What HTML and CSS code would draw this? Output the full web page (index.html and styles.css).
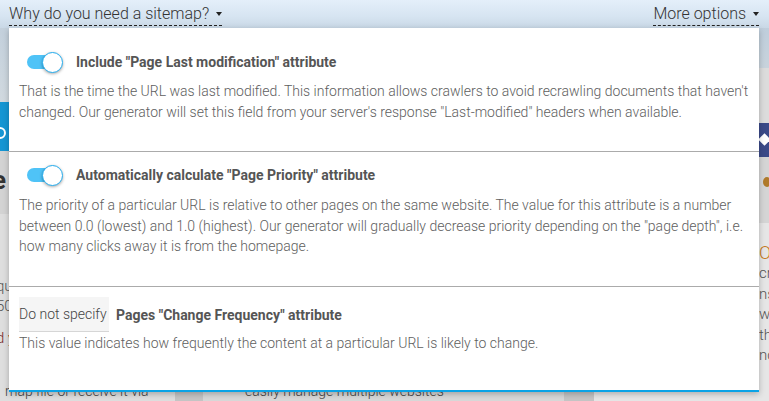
FILE: index.html
```html
<!DOCTYPE html>
<html>
<head>
<meta charset="utf-8">
<link rel="stylesheet" href="styles.css">
</head>
<body>
<div class="page">
  <div class="bar">
    <span class="trigger">Why do you need a sitemap? <i class="caret"></i></span>
    <span class="trigger">More options <i class="caret"></i></span>
  </div>
  <div class="bg">
    <div class="col col-left">
      <div class="hero-l"></div>
      <div class="blue-l"><span class="ico-l"></span></div>
      <div class="gray-l"><span class="big">e</span></div>
      <div class="light-l">
        <p class="t">qu</p>
        <p class="t">50</p>
        <p class="t red">d y</p>
        <p class="t gap">map file or receive it via</p>
      </div>
    </div>
    <div class="gutter"></div>
    <div class="col col-mid">
      <div class="mid-fill"></div>
      <p class="t mid-text">easily manage multiple websites</p>
    </div>
    <div class="gutter g2"></div>
    <div class="col col-right">
      <div class="hero-r"></div>
      <div class="gray-r"></div>
      <div class="blue-r"><span class="ico-r"></span></div>
      <div class="gray-r2"><span class="dot"></span></div>
      <div class="light-r">
        <p class="t o">O</p>
        <p class="t r1">cr</p>
        <p class="t r1">ns</p>
        <p class="t r1">w</p>
        <p class="t r1">th</p>
        <p class="t r1">no</p>
        <p class="t r1">depend required to create</p>
      </div>
    </div>
  </div>

  <div class="panel">
    <section class="opt opt1">
      <div class="row">
        <span class="toggle"><span class="knob"></span></span>
        <span class="title">Include "Page Last modification" attribute</span>
      </div>
      <p class="desc">That is the time the URL was last modified. This information allows crawlers to avoid recrawling documents that haven't changed. Our generator will set this field from your server's response "Last-modified" headers when available.</p>
    </section>
    <section class="opt opt2">
      <div class="row">
        <span class="toggle"><span class="knob"></span></span>
        <span class="title">Automatically calculate "Page Priority" attribute</span>
      </div>
      <p class="desc">The priority of a particular URL is relative to other pages on the same website. The value for this attribute is a number between 0.0 (lowest) and 1.0 (highest). Our generator will gradually decrease priority depending on the "page depth", i.e. how many clicks away it is from the homepage.</p>
    </section>
    <section class="opt opt3">
      <div class="row row3">
        <span class="select">Do not specify</span>
        <span class="title">Pages "Change Frequency" attribute</span>
      </div>
      <p class="desc">This value indicates how frequently the content at a particular URL is likely to change.</p>
    </section>
  </div>
</div>
</body>
</html>
```

FILE: styles.css
```css
* { box-sizing: border-box; }
html, body { margin: 0; padding: 0; }
body {
  width: 769px;
  height: 401px;
  overflow: hidden;
  font-family: Roboto, "Liberation Sans", sans-serif;
  background: #d6d6d6;
}
.page { position: relative; width: 769px; height: 401px; overflow: hidden; }

.bar {
  height: 28px;
  display: flex;
  justify-content: space-between;
  padding: 0 10px 0 9px;
  background: linear-gradient(to bottom, #e4effa 0%, #d6e4f1 60%, #c9d8e6 100%);
}
.trigger {
  display: inline-flex;
  align-items: center;
  height: 26px;
  padding-top: 1px;
  font-size: 16px;
  font-weight: 300;
  color: #333;
  border-bottom: 1px dashed #222;
  white-space: pre;
}
.caret {
  display: inline-block;
  width: 0; height: 0;
  margin-left: 3px;
  margin-top: 2px;
  border-left: 3.5px solid transparent;
  border-right: 3.5px solid transparent;
  border-top: 4px solid #222;
}

/* background page (behind the modal) */
.bg {
  display: flex;
  height: 373px;
}
.col { display: flex; flex-direction: column; }
.col-left { width: 175px; background: #d9d9d9; }
.gutter { width: 28px; background: #c5c5c5; }
.g2 { width: 30px; }
.col-mid { width: 361px; background: #d8d8d8; }
.col-right { width: 175px; background: #e2e2e2; }
.mid-fill { height: 363px; }
.t { margin: 0; font-size: 14px; line-height: 20px; color: #555; white-space: nowrap; font-weight: 300; }
.mid-text { padding-left: 42px; color: #444; }

.hero-l { height: 75px; background: linear-gradient(to bottom, #c3d0dc, #d1d9df); }
.blue-l { height: 50px; background: #1596d3; position: relative; }
.ico-l { position: absolute; left: -6px; top: 25px; width: 12px; height: 12px; border-radius: 50%; border: 2px solid #fff; }
.gray-l { height: 64px; background: #d3d3d3; padding-top: 14px; }
.big { font-size: 26px; font-weight: 700; color: #333; margin-left: -8px; line-height: 30px; }
.light-l { flex: 1; background: #dedede; padding-top: 62px; }
.light-l .t { margin-left: -4px; font-size: 15px; }
.red { color: #7a2b2b; margin-top: 12px; }
.light-l .gap { margin-top: 33px; margin-left: 5px; color: #444; font-size: 14px; }

.hero-r { height: 40px; background: linear-gradient(to bottom, #bfcedc, #c8d3dc); }
.gray-r { height: 55px; background: #dcdcdc; }
.blue-r { height: 34px; background: #3b4a88; position: relative; }
.ico-r { position: absolute; right: 0; top: 12px; width: 9px; height: 9px; background: #fff; transform: rotate(45deg); }
.gray-r2 { height: 66px; background: #d5d5d5; position: relative; }
.dot { position: absolute; right: -2px; top: 20px; width: 8px; height: 10px; border-radius: 50%; background: #b07a2a; }
.light-r { flex: 1; background: #e6e6e6; padding-top: 20px; padding-left: 163px; }
.o { font-size: 18px; color: #c77a1c; margin-left: 2px; }
.r1 { margin-left: 2px; color: #555; font-size: 15px; }
.light-r .t:last-child { margin-left: 20px; margin-top: 6px; font-size: 14px; }
.light-r .r1 { line-height: 20.5px; }

/* modal panel */
.panel {
  position: absolute;
  left: 9px;
  top: 28px;
  width: 750px;
  height: 364px;
  background: #fff;
  border-bottom: 2px solid #0aa3e6;
  box-shadow: 0 2px 6px rgba(0,0,0,0.25);
}
.opt {
  padding: 0 10px;
  border-bottom: 1px solid #ababab;
}
.opt3 { border-bottom: none; }
.opt1 { padding-top: 24px; padding-bottom: 29px; }
.opt2 { padding-top: 13px; padding-bottom: 29.5px; }
.opt3 { padding-top: 10px; }

.row { display: flex; align-items: center; height: 20px; }
.row3 { height: 35px; }
.toggle {
  position: relative;
  flex: none;
  width: 33px;
  height: 14px;
  margin-left: 8px;
  margin-right: 16px;
  border-radius: 7px;
  background: #4fc3f7;
}
.knob {
  position: absolute;
  right: -3px;
  top: -3.5px;
  width: 21px;
  height: 21px;
  border-radius: 50%;
  background: #fff;
  border: 1.5px solid #25aef0;
  box-shadow: 0 1px 3px rgba(0,0,0,0.35);
}
.title {
  font-size: 14px;
  font-weight: 700;
  color: #555;
  white-space: nowrap;
}
.desc {
  margin: 9px 0 0;
  font-size: 14px;
  font-weight: 300;
  line-height: 20.5px;
  color: #5e5e5e;
}
.opt2 .desc { margin-top: 10px; }
.opt3 .desc { margin-top: 1px; }
.select {
  display: flex;
  align-items: center;
  flex: none;
  height: 35px;
  width: 90px;
  margin-right: 7px;
  background: #f5f5f5;
  border-bottom: 1px solid #d6d6d6;
  font-size: 14px;
  font-weight: 300;
  color: #444;
  white-space: nowrap;
  overflow: hidden;
}
```
